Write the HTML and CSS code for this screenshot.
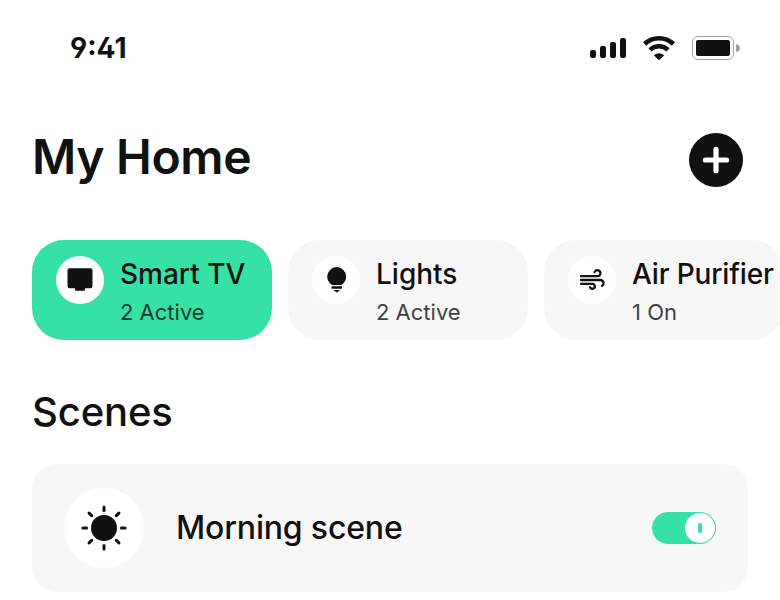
FILE: index.html
```html
<!DOCTYPE html>
<html lang="en">
<head>
<meta charset="utf-8">
<title>My Home</title>
<link rel="stylesheet" href="styles.css">
</head>
<body>
<div class="status">
  <span class="time">9:41</span>
  <svg class="indicators" width="152" height="26" viewBox="0 0 152 26">
    <g fill="#111">
      <rect x="2" y="15" width="6" height="8" rx="2"/>
      <rect x="12" y="11" width="6" height="12" rx="2"/>
      <rect x="22" y="7" width="6" height="16" rx="2"/>
      <rect x="32" y="3" width="6" height="20" rx="2"/>
      <path d="M65.800 20.200Q71 16.200 76.200 20.200L71.900 24.400Q71 25.200 70.100 24.400Z"/>
    </g>
    <g fill="none" stroke="#111" stroke-width="4.600">
      <path d="M56.600 9a20.800 20.800 0 0 1 28.800 0"/>
      <path d="M62 14.900a13 13 0 0 1 18 0"/>
    </g>
    <rect x="104.500" y="1.500" width="41" height="23" rx="5.500" fill="none" stroke="#a0a0a0"/>
    <rect x="108" y="5" width="34" height="16" rx="2" fill="#111"/>
    <path d="M148 9q4 1 4 4t-4 4Z" fill="#a0a0a0"/>
  </svg>
</div>
<header class="header">
  <h1>My Home</h1>
  <button class="add" aria-label="Add">
    <svg width="54" height="54" viewBox="0 0 54 54"><path d="M27 16.300v21.400M16.300 27h21.400" stroke="#fff" stroke-width="5.200" stroke-linecap="round"/></svg>
  </button>
</header>
<div class="devices">
  <div class="device active">
    <div class="icon">
      <svg width="48" height="48" viewBox="0 0 48 48" fill="#111"><path d="M13.500 12.300h21q2 0 2 2v16q0 2-2 2h-5.500v1.500q0 1-1 1h-8q-1 0-1-1v-1.500h-5.500q-2 0-2-2V14.300q0-2 2-2Z"/></svg>
    </div>
    <div class="info"><div class="name">Smart TV</div><div class="state">2 Active</div></div>
  </div>
  <div class="device">
    <div class="icon">
      <svg width="48" height="48" viewBox="0 0 48 48" fill="#111"><path d="M20 29q-4.800-3-4.800-8.400a9.500 9.500 0 0 1 19 0q0 5.400-4.800 8.400Z"/><rect x="19.500" y="30.200" width="10.500" height="2.500" rx=".5"/><path d="M21.500 34h6.500l-2.300 2.100q-.9.700-1.800 0Z"/></svg>
    </div>
    <div class="info"><div class="name">Lights</div><div class="state">2 Active</div></div>
  </div>
  <div class="device">
    <div class="icon">
      <svg width="48" height="48" viewBox="0 0 48 48" fill="none" stroke="#111" stroke-width="2.300" stroke-linecap="round"><path d="M13 20.200h16.500a3 3 0 1 0-2.900-4M13 24h19.500a3.200 3.200 0 0 1 1.500 5.900M13 27.800h11.300a2.500 2.500 0 1 1-2.300 3.500"/></svg>
    </div>
    <div class="info"><div class="name tight">Air Purifier</div><div class="state">1 On</div></div>
  </div>
</div>
<h2>Scenes</h2>
<div class="scene">
  <div class="scene-icon">
    <svg width="80" height="80" viewBox="-40 -40 80 80" fill="#111"><circle r="13"/><path d="M0-21.100v3.700M0 21.100v-3.700M-21.100 0h3.700M21.100 0h-3.700M-14.900-14.900l2.500 2.500M14.900-14.900l-2.500 2.500M-14.900 14.900l2.500-2.500M14.900 14.900l-2.500-2.500" stroke="#111" stroke-width="3" stroke-linecap="round"/></svg>
  </div>
  <div class="scene-name">Morning scene</div>
  <div class="toggle"><div class="knob"><div class="mark"></div></div></div>
</div>
</body>
</html>
```
FILE: styles.css
```css
* { box-sizing: border-box; }
body {
  margin: 0;
  width: 780px;
  height: 600px;
  overflow: hidden;
  background: #fff;
  color: #111;
  font-family: Inter, sans-serif;
}
svg { display: block; }
h1, h2 { margin: 0; }
.status {
  display: flex;
  align-items: center;
  justify-content: space-between;
  height: 96px;
  padding: 0 40px 0 70px;
}
.time { font-size: 28px; line-height: 34px; font-weight: 650; font-feature-settings: "cv04" 1, "ss01" 1; }
.header {
  display: flex;
  align-items: flex-start;
  justify-content: space-between;
  height: 128px;
  padding: 32px 37px 0 32px;
}
h1 { font-size: 48px; line-height: 58px; font-weight: 600; letter-spacing: -.35px; }
.add {
  width: 54px;
  height: 54px;
  margin-top: 5px;
  padding: 0;
  border: 0;
  border-radius: 50%;
  background: #111;
}
.devices { display: flex; gap: 16px; padding: 16px 0 0 32px; }
.device {
  display: flex;
  flex: 0 0 240px;
  height: 100px;
  padding: 16px 0 0 24px;
  border-radius: 32px;
  background: #f7f7f7;
}
.device.active { background: #35e1a4; }
.icon { flex: none; width: 48px; height: 48px; border-radius: 50%; background: #fff; }
.info { margin-left: 16px; white-space: nowrap; }
.name { font-size: 28px; line-height: 36px; font-weight: 450; }
.name.tight { letter-spacing: -.15px; }
.state { margin-top: 6px; font-size: 22px; line-height: 28px; opacity: .8; }
h2 { padding: 48px 0 0 32px; font-size: 40px; line-height: 48px; font-weight: 450; letter-spacing: -.15px; }
.scene {
  display: flex;
  align-items: center;
  width: 716px;
  height: 128px;
  margin: 28px 0 0 32px;
  padding: 0 32px;
  border-radius: 24px;
  background: #f7f7f7;
}
.scene-icon { width: 80px; height: 80px; border-radius: 50%; background: #fff; }
.scene-name { flex: 1; margin-left: 32px; font-size: 32px; line-height: 40px; font-weight: 450; letter-spacing: -.17px; }
.toggle {
  display: flex;
  align-items: center;
  justify-content: flex-end;
  width: 64px;
  height: 32px;
  padding-right: 1px;
  border-radius: 16px;
  background: #35e1a4;
}
.knob { display: grid; place-items: center; width: 30px; height: 30px; border-radius: 50%; background: #fff; }
.mark { width: 4px; height: 10px; border-radius: 2px; background: #35e1a4; }
```
